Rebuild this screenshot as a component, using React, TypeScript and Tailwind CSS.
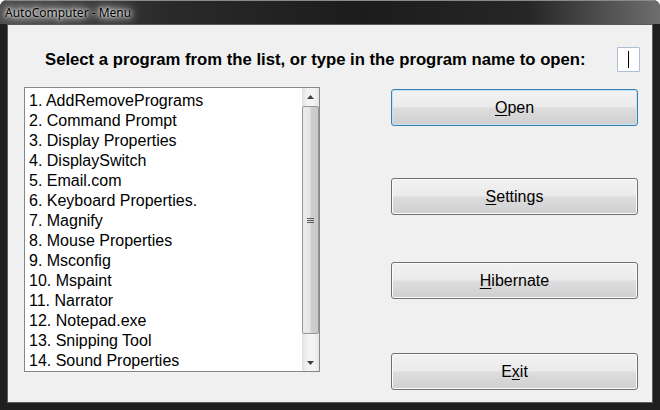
import React from "react";

const items = [
  "1. AddRemovePrograms",
  "2. Command Prompt",
  "3. Display Properties",
  "4. DisplaySwitch",
  "5. Email.com",
  "6. Keyboard Properties.",
  "7. Magnify",
  "8. Mouse Properties",
  "9. Msconfig",
  "10. Mspaint",
  "11. Narrator",
  "12. Notepad.exe",
  "13. Snipping Tool",
  "14. Sound Properties",
];

function Btn({ pre, u, post, focused, className }: { pre: string; u: string; post: string; focused?: boolean; className?: string }) {
  return (
    <div
      className={
        "w-[247px] h-[37px] rounded-[3px] border flex items-center justify-center text-[16px] text-black bg-[linear-gradient(#f2f2f2_0%,#ebebeb_48%,#dddddd_52%,#cfcfcf_100%)] " +
        (focused ? "border-[#3c7fb1] shadow-[inset_0_0_0_1px_#bfe4f8]" : "border-[#707070] shadow-[inset_0_0_0_1px_#fcfcfc]") +
        " " +
        (className ?? "")
      }
      style={{ fontFamily: '"Liberation Sans", Arial, sans-serif' }}
    >
      <span>
        {pre}
        <span className="underline underline-offset-[2px]">{u}</span>
        {post}
      </span>
    </div>
  );
}

export default function App() {
  return (
    <div className="w-[660px] h-[410px] bg-[#1e1e1e] rounded-t-[7px] flex flex-col overflow-hidden">
      <div className="h-[24px] shrink-0 flex items-center pl-[5px] bg-[linear-gradient(90deg,#4a4a4a_0%,#2a2a2a_25%,#1c1c1c_55%,#262626_80%,#6e6e6e_100%)] border-t border-[#8a8a8a]">
        <span
          className="text-[12px] text-black [text-shadow:0_0_3px_#ffffff,0_0_6px_#e0e0e0,0_0_10px_#c8c8c8,0_0_14px_#b0b0b0,0_0_14px_#b0b0b0]"
          style={{ fontFamily: '"Noto Sans", "Open Sans", sans-serif' }}
        >
          AutoComputer - Menu
        </span>
      </div>
      <div className="flex-1 flex px-[7px] pb-[7px] pt-0">
        <div className="flex-1 border border-[#5c5c5c] bg-[#f0f0f0] flex flex-col" style={{ fontFamily: '"Liberation Sans", Arial, sans-serif' }}>
          <div className="flex items-center justify-between h-[25px] mt-[22px] pl-[37px] pr-[12px]">
            <span className="font-bold text-[16.7px] text-black whitespace-nowrap">
              Select a program from the list, or type in the program name to open:
            </span>
            <div className="w-[23px] h-[25px] bg-white border border-[#abbfd6] rounded-[1px] flex items-center justify-center">
              <div className="w-px h-[17px] bg-black" />
            </div>
          </div>
          <div className="flex mt-[15px] pl-[16px]">
            <div className="w-[296px] h-[285px] border border-[#828790] bg-white flex">
              <div className="flex-1 flex flex-col pl-[4px] pt-[3px]">
                {items.map((t) => (
                  <div key={t} className="h-[20px] leading-[20px] text-[16px] text-black whitespace-nowrap">
                    {t}
                  </div>
                ))}
              </div>
              <div className="w-[17px] flex flex-col bg-[linear-gradient(90deg,#e2e2e2_0%,#f2f2f2_30%,#f4f4f4_70%,#e6e6e6_100%)]">
                <div className="h-[18px] flex items-center justify-center">
                  <svg width="7" height="4" viewBox="0 0 7 4">
                    <path d="M0 4 L3.5 0 L7 4 Z" fill="#404040" />
                  </svg>
                </div>
                <div className="h-[228px] border border-[#979797] rounded-[2px] bg-[linear-gradient(90deg,#ececec_0%,#e4e4e4_45%,#cfcfcf_55%,#c8c8c8_100%)] flex items-center justify-center">
                  <div className="flex flex-col gap-[1px]">
                    <div className="w-[7px] h-[1px] bg-[#5a5a5a]" />
                    <div className="w-[7px] h-[1px] bg-[#5a5a5a]" />
                    <div className="w-[7px] h-[1px] bg-[#5a5a5a]" />
                  </div>
                </div>
                <div className="flex-1 flex items-end justify-center pb-[6px]">
                  <svg width="7" height="4" viewBox="0 0 7 4">
                    <path d="M0 0 L7 0 L3.5 4 Z" fill="#404040" />
                  </svg>
                </div>
              </div>
            </div>
            <div className="ml-[71px] flex flex-col">
              <Btn pre="" u="O" post="pen" focused className="mt-[2px]" />
              <Btn pre="" u="S" post="ettings" className="mt-[52px]" />
              <Btn pre="" u="H" post="ibernate" className="mt-[47px]" />
              <Btn pre="E" u="x" post="it" className="mt-[54px]" />
            </div>
          </div>
        </div>
      </div>
    </div>
  );
}
